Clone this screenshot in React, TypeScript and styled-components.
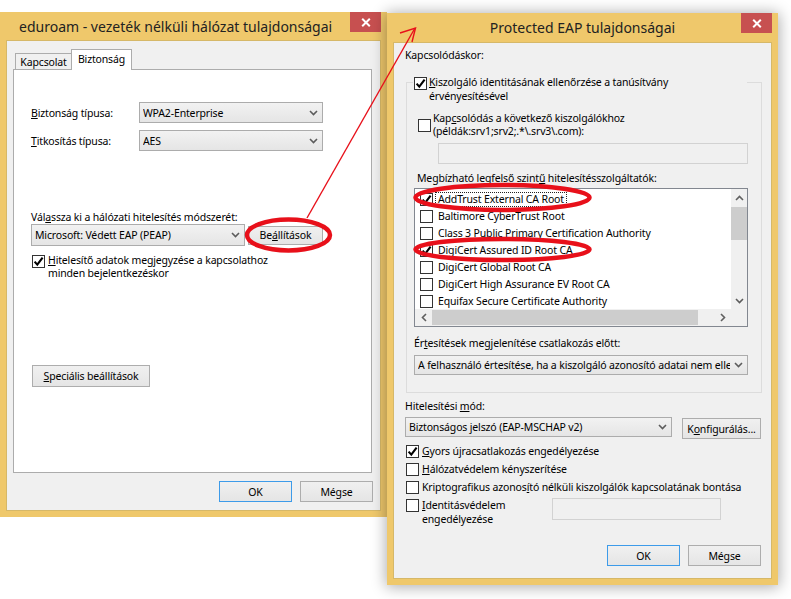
import React from "react";
import styled, { createGlobalStyle } from "styled-components";

const Global = createGlobalStyle`
  html, body { margin: 0; padding: 0; background: #fff; }
  body {
    font-family: "Noto Sans", "Open Sans", sans-serif;
    font-size: 10.5px;
    letter-spacing: -0.15px;
    color: #000;
  }
  * { box-sizing: border-box; }
`;

const Desktop = styled.div`
  position: relative;
  width: 791px;
  height: 599px;
  overflow: hidden;
  background: #fff;
`;

const Window = styled.div<{ $x: number; $y: number; $w: number; $h: number; $active?: boolean }>`
  position: absolute;
  left: ${(p) => p.$x}px;
  top: ${(p) => p.$y}px;
  width: ${(p) => p.$w}px;
  height: ${(p) => p.$h}px;
  background: #efc86b;
  padding: 0 6px 6px;
  display: flex;
  flex-direction: column;
  box-shadow: ${(p) => (p.$active ? "0 1px 14px 1px rgba(0,0,0,0.33)" : "none")};
  z-index: ${(p) => (p.$active ? 2 : 1)};
`;

const TitleBar = styled.div<{ $h: number }>`
  height: ${(p) => p.$h}px;
  flex: none;
  display: flex;
`;

const TitleText = styled.div<{ $center?: boolean }>`
  flex: 1;
  align-self: center;
  font-size: 14px;
  letter-spacing: 0;
  line-height: 18px;
  color: #222;
  white-space: nowrap;
  padding-left: ${(p) => (p.$center ? "31px" : "13px")};
  text-align: ${(p) => (p.$center ? "center" : "left")};
  margin-top: 1px;
`;

const CloseButton = styled.div`
  width: 31px;
  height: 20px;
  background: #c75050;
  display: flex;
  align-items: center;
  justify-content: center;
`;

const Client = styled.div<{ $pl?: number; $pr?: number }>`
  flex: 1;
  min-height: 0;
  background: #f0f0f0;
  border: 1px solid #d6b868;
  display: flex;
  flex-direction: column;
  padding-left: ${(p) => p.$pl ?? 0}px;
  padding-right: ${(p) => p.$pr ?? 0}px;
`;

/* ---------- common controls ---------- */

const Label = styled.div<{ $mt?: number; $ml?: number }>`
  line-height: 14px;
  white-space: nowrap;
  margin-top: ${(p) => p.$mt ?? 0}px;
  margin-left: ${(p) => p.$ml ?? 0}px;
`;

const SelectBox = styled.div<{ $w: number; $h: number; $mt?: number; $ml?: number }>`
  width: ${(p) => p.$w}px;
  height: ${(p) => p.$h}px;
  margin-top: ${(p) => p.$mt ?? 0}px;
  margin-left: ${(p) => p.$ml ?? 0}px;
  flex: none;
  border: 1px solid #acacac;
  background: linear-gradient(#f2f2f2, #e5e5e5);
  display: flex;
  align-items: center;
  padding-left: 3px;
`;

const SelectText = styled.span`
  flex: 1;
  overflow: hidden;
  white-space: nowrap;
  line-height: 14px;
`;

const ChevronSlot = styled.span`
  width: 17px;
  flex: none;
  display: flex;
  align-items: center;
  justify-content: center;
`;

const Button = styled.div<{ $w: number; $h: number; $default?: boolean; $mt?: number; $ml?: number }>`
  width: ${(p) => p.$w}px;
  height: ${(p) => p.$h}px;
  margin-top: ${(p) => p.$mt ?? 0}px;
  margin-left: ${(p) => p.$ml ?? 0}px;
  flex: none;
  border: 1px solid ${(p) => (p.$default ? "#3d9be9" : "#adadad")};
  background: linear-gradient(#f0f0f0, #e5e5e5);
  display: flex;
  align-items: center;
  justify-content: center;
  white-space: nowrap;
  line-height: 14px;
`;

const TextField = styled.div<{ $w: number; $h: number; $mt?: number; $ml?: number }>`
  width: ${(p) => p.$w}px;
  height: ${(p) => p.$h}px;
  margin-top: ${(p) => p.$mt ?? 0}px;
  margin-left: ${(p) => p.$ml ?? 0}px;
  flex: none;
  border: 1px solid #d2d2d2;
  background: #f0f0f0;
`;

const Box = styled.span<{ $mt?: number }>`
  width: 13px;
  height: 13px;
  flex: none;
  border: 1px solid #333;
  background: #fff;
  display: flex;
  align-items: center;
  justify-content: center;
  margin-top: ${(p) => p.$mt ?? 0}px;
`;

const CheckRow = styled.div<{ $mt?: number; $ml?: number; $gap?: number; $lh?: number; $center?: boolean }>`
  display: flex;
  align-items: ${(p) => (p.$center ? "center" : "flex-start")};
  gap: ${(p) => p.$gap ?? 3}px;
  margin-top: ${(p) => p.$mt ?? 0}px;
  margin-left: ${(p) => p.$ml ?? 0}px;
  line-height: ${(p) => p.$lh ?? 14}px;
  white-space: nowrap;
`;

const ButtonRow = styled.div<{ $mt: number; $pr?: number }>`
  display: flex;
  justify-content: flex-end;
  gap: 8px;
  margin-top: ${(p) => p.$mt}px;
  padding-right: ${(p) => p.$pr ?? 0}px;
`;

/* ---------- left dialog parts ---------- */

const TabArea = styled.div`
  margin: 8px 8px 0 6px;
  display: flex;
  flex-direction: column;
`;

const TabRow = styled.div`
  display: flex;
  align-items: flex-end;
  padding-left: 2px;
  height: 20px;
`;

const Tab = styled.div<{ $active?: boolean }>`
  position: relative;
  z-index: ${(p) => (p.$active ? 1 : 0)};
  width: ${(p) => (p.$active ? 61 : 57)}px;
  height: ${(p) => (p.$active ? 21 : 16)}px;
  margin-bottom: ${(p) => (p.$active ? -1 : 0)}px;
  margin-left: ${(p) => (p.$active ? -1 : 0)}px;
  border: 1px solid #acacac;
  border-bottom: none;
  background: ${(p) => (p.$active ? "#fff" : "#f0f0f0")};
  display: flex;
  justify-content: center;
  align-items: ${(p) => (p.$active ? "flex-start" : "center")};
  padding-top: ${(p) => (p.$active ? 2 : 0)}px;
  line-height: 14px;
`;

const TabPanel = styled.div`
  height: 404px;
  border: 1px solid #acacac;
  background: #fff;
  display: flex;
  flex-direction: column;
`;

const FieldGrid = styled.div`
  display: grid;
  grid-template-columns: 108px 184px;
  row-gap: 7px;
  align-items: center;
  margin: 32px 0 0 17px;
`;

const MethodRow = styled.div`
  display: flex;
  align-items: center;
  gap: 3px;
  margin: 0 0 0 17px;
`;

/* ---------- right dialog parts ---------- */

const GroupBox = styled.div`
  width: 356px;
  margin: 20px 0 0 1px;
  border: 1px solid #dcdcdc;
  padding-bottom: 17px;
  display: flex;
  flex-direction: column;
`;

const GroupHeader = styled.div`
  width: 334px;
  margin: -8px 0 0 6px;
  padding-left: 1px;
  background: #f0f0f0;
  display: flex;
  align-items: flex-start;
  gap: 2px;
  line-height: 14px;
  white-space: nowrap;
`;

const ListBox = styled.div`
  width: 334px;
  height: 139px;
  margin: 3px 0 0 7px;
  border: 1px solid #828790;
  background: #fff;
  display: grid;
  grid-template-columns: 316px 16px;
  grid-template-rows: 120px 17px;
`;

const ListItems = styled.div`
  overflow: hidden;
  padding-top: 2px;
  display: flex;
  flex-direction: column;
`;

const ListItem = styled.div`
  height: 17px;
  flex: none;
  display: flex;
  align-items: center;
  padding-left: 5px;
  gap: 2px;
  white-space: nowrap;
  line-height: 13px;
`;

const ItemText = styled.span<{ $focus?: boolean }>`
  border: 1px dotted ${(p) => (p.$focus ? "#222" : "transparent")};
  padding: 0 2px;
`;

const VScroll = styled.div`
  background: #f0f0f0;
  display: flex;
  flex-direction: column;
`;

const HScroll = styled.div`
  background: #f0f0f0;
  display: flex;
  align-items: stretch;
`;

const ScrollButton = styled.div<{ $w: number; $h: number }>`
  width: ${(p) => p.$w}px;
  height: ${(p) => p.$h}px;
  flex: none;
  display: flex;
  align-items: center;
  justify-content: center;
`;

const ThumbV = styled.div`
  margin-top: 1px;
  height: 33px;
  background: #cdcdcd;
`;

const ThumbH = styled.div`
  margin: 1px 0;
  width: 266px;
  background: #cdcdcd;
`;

const TrackFill = styled.div`
  flex: 1;
`;

const Corner = styled.div`
  background: #f0f0f0;
`;

const AuthRow = styled.div`
  display: flex;
  align-items: flex-start;
  gap: 10px;
  margin-top: 4px;
`;

const OptionList = styled.div`
  display: flex;
  flex-direction: column;
  gap: 4px;
  margin: 5px 0 0 1px;
`;

const TwoLine = styled.span<{ $w?: number }>`
  display: block;
  width: ${(p) => (p.$w ? `${p.$w}px` : "auto")};
  flex: none;
`;

const Overlay = styled.svg`
  position: absolute;
  left: 0;
  top: 0;
  width: 791px;
  height: 599px;
  pointer-events: none;
  z-index: 10;
`;

/* ---------- icons ---------- */

const CloseIcon = () => (
  <svg width="10" height="9" viewBox="0 0 10 9">
    <path d="M1.2 0.8 L8.8 8.2 M8.8 0.8 L1.2 8.2" stroke="#fff" strokeWidth="2" />
  </svg>
);

const ChevronDown = () => (
  <svg width="9" height="6" viewBox="0 0 9 6">
    <path d="M1 1 L4.5 4.5 L8 1" stroke="#5c5c5c" strokeWidth="1.6" fill="none" />
  </svg>
);

const ChevronUp = () => (
  <svg width="9" height="6" viewBox="0 0 9 6">
    <path d="M1 5 L4.5 1.5 L8 5" stroke="#606060" strokeWidth="1.6" fill="none" />
  </svg>
);

const ChevronLeft = () => (
  <svg width="6" height="9" viewBox="0 0 6 9">
    <path d="M5 1 L1.5 4.5 L5 8" stroke="#606060" strokeWidth="1.6" fill="none" />
  </svg>
);

const ChevronRight = () => (
  <svg width="6" height="9" viewBox="0 0 6 9">
    <path d="M1 1 L4.5 4.5 L1 8" stroke="#606060" strokeWidth="1.6" fill="none" />
  </svg>
);

const CheckMark = () => (
  <svg width="11" height="11" viewBox="0 0 11 11">
    <path d="M1.6 5.6 L4.3 8.6 L9.6 1.6" stroke="#000" strokeWidth="2.1" fill="none" />
  </svg>
);

const CheckBox = ({ checked, mt }: { checked?: boolean; mt?: number }) => (
  <Box $mt={mt}>{checked ? <CheckMark /> : null}</Box>
);

const Select = ({
  w,
  h,
  text,
  mt,
  ml,
}: {
  w: number;
  h: number;
  text: string;
  mt?: number;
  ml?: number;
}) => (
  <SelectBox $w={w} $h={h} $mt={mt} $ml={ml}>
    <SelectText>{text}</SelectText>
    <ChevronSlot>
      <ChevronDown />
    </ChevronSlot>
  </SelectBox>
);

const certs: { name: string; checked: boolean; focus?: boolean }[] = [
  { name: "AddTrust External CA Root", checked: true, focus: true },
  { name: "Baltimore CyberTrust Root", checked: false },
  { name: "Class 3 Public Primary Certification Authority", checked: false },
  { name: "DigiCert Assured ID Root CA", checked: true },
  { name: "DigiCert Global Root CA", checked: false },
  { name: "DigiCert High Assurance EV Root CA", checked: false },
  { name: "Equifax Secure Certificate Authority", checked: false },
];

function LeftDialog() {
  return (
    <Window $x={0} $y={12} $w={387} $h={505}>
      <TitleBar $h={28}>
        <TitleText>eduroam - vezeték nélküli hálózat tulajdonságai</TitleText>
        <CloseButton>
          <CloseIcon />
        </CloseButton>
      </TitleBar>
      <Client>
        <TabArea>
          <TabRow>
            <Tab>Kapcsolat</Tab>
            <Tab $active>Biztonság</Tab>
          </TabRow>
          <TabPanel>
            <FieldGrid>
              <Label>
                <u>B</u>iztonság típusa:
              </Label>
              <Select w={184} h={21} text="WPA2-Enterprise" />
              <Label>
                <u>T</u>itkosítás típusa:
              </Label>
              <Select w={184} h={21} text="AES" />
            </FieldGrid>
            <Label $mt={59} $ml={17}>
              Vál<u>a</u>ssza ki a hálózati hitelesítés módszerét:
            </Label>
            <MethodRow>
              <Select w={214} h={22} text="Microsoft: Védett EAP (PEAP)" />
              <Button $w={75} $h={19}>
                Be<u>á</u>llítások
              </Button>
            </MethodRow>
            <CheckRow $mt={8} $ml={18} $lh={13} $gap={3}>
              <CheckBox checked mt={1} />
              <TwoLine>
                <u>H</u>itelesítő adatok megjegyzése a kapcsolathoz
                <br />
                minden bejelentkezéskor
              </TwoLine>
            </CheckRow>
            <Button $w={118} $h={22} $mt={85} $ml={18}>
              <span>
                <u>S</u>peciális beállítások
              </span>
            </Button>
          </TabPanel>
        </TabArea>
        <ButtonRow $mt={8} $pr={7}>
          <Button $w={73} $h={21} $default>
            OK
          </Button>
          <Button $w={73} $h={21}>
            Mégse
          </Button>
        </ButtonRow>
      </Client>
    </Window>
  );
}

function RightDialog() {
  return (
    <Window $x={387} $y={13} $w={391} $h={572} $active>
      <TitleBar $h={29}>
        <TitleText $center>Protected EAP tulajdonságai</TitleText>
        <CloseButton>
          <CloseIcon />
        </CloseButton>
      </TitleBar>
      <Client $pl={11} $pr={10}>
        <Label $mt={5}>Kapcsolódáskor:</Label>
        <GroupBox>
          <GroupHeader>
            <CheckBox checked mt={2} />
            <TwoLine>
              <u>K</u>iszolgáló identitásának ellenőrzése a tanúsítvány
              <br />
              érvényesítésével
            </TwoLine>
          </GroupHeader>
          <CheckRow $mt={9} $ml={11} $lh={13} $gap={2} $center>
            <CheckBox />
            <TwoLine>
              Kap<u>c</u>solódás a következő kiszolgálókhoz
              <br />
              (példák:srv1;srv2;.*\.srv3\.com):
            </TwoLine>
          </CheckRow>
          <TextField $w={310} $h={21} $mt={5} $ml={31} />
          <Label $mt={7} $ml={10}>
            Megbízható legfelső szint<u>ű</u> hitelesítésszolgáltatók:
          </Label>
          <ListBox>
            <ListItems>
              {certs.map((c) => (
                <ListItem key={c.name}>
                  <CheckBox checked={c.checked} />
                  <ItemText $focus={c.focus}>{c.name}</ItemText>
                </ListItem>
              ))}
            </ListItems>
            <VScroll>
              <ScrollButton $w={16} $h={17}>
                <ChevronUp />
              </ScrollButton>
              <ThumbV />
              <TrackFill />
              <ScrollButton $w={16} $h={17}>
                <ChevronDown />
              </ScrollButton>
            </VScroll>
            <HScroll>
              <ScrollButton $w={17} $h={17}>
                <ChevronLeft />
              </ScrollButton>
              <ThumbH />
              <TrackFill />
              <ScrollButton $w={17} $h={17}>
                <ChevronRight />
              </ScrollButton>
            </HScroll>
            <Corner />
          </ListBox>
          <Label $mt={9} $ml={7}>
            Ér<u>t</u>esítések megjelenítése csatlakozás előtt:
          </Label>
          <Select
            w={334}
            h={20}
            mt={5}
            ml={7}
            text="A felhasználó értesítése, ha a kiszolgáló azonosító adatai nem ellenőrizhetők"
          />
        </GroupBox>
        <Label $mt={6}>
          Hitelesítési <u>m</u>ód:
        </Label>
        <AuthRow>
          <Select w={267} h={20} text="Biztonságos jelszó (EAP-MSCHAP v2)" />
          <Button $w={79} $h={21} $mt={1}>
            <span>
              K<u>o</u>nfigurálás...
            </span>
          </Button>
        </AuthRow>
        <OptionList>
          <CheckRow $gap={3}>
            <CheckBox checked mt={1} />
            <span>
              <u>G</u>yors újracsatlakozás engedélyezése
            </span>
          </CheckRow>
          <CheckRow $gap={3}>
            <CheckBox mt={1} />
            <span>
              <u>H</u>álózatvédelem kényszerítése
            </span>
          </CheckRow>
          <CheckRow $gap={3}>
            <CheckBox mt={1} />
            <span>
              Kriptografikus azonos<u>í</u>tó nélküli kiszolgálók kapcsolatának bontása
            </span>
          </CheckRow>
          <CheckRow $gap={3}>
            <CheckBox mt={1} />
            <TwoLine $w={127}>
              <u>I</u>dentitásvédelem
              <br />
              engedélyezése
            </TwoLine>
            <TextField $w={169} $h={22} />
          </CheckRow>
        </OptionList>
        <ButtonRow $mt={19}>
          <Button $w={73} $h={21} $default>
            OK
          </Button>
          <Button $w={73} $h={21}>
            Mégse
          </Button>
        </ButtonRow>
      </Client>
    </Window>
  );
}

function Annotations() {
  const red = "#e8101a";
  return (
    <Overlay viewBox="0 0 791 599">
      <ellipse cx={288.5} cy={235} rx={41.5} ry={15.5} fill="none" stroke={red} strokeWidth={4.5} />
      <ellipse cx={502.5} cy={197.5} rx={87} ry={12.5} fill="none" stroke={red} strokeWidth={4.5} />
      <ellipse cx={502.5} cy={249.5} rx={87} ry={10.5} fill="none" stroke={red} strokeWidth={4.5} />
      <line x1={307} y1={218} x2={415} y2={28} stroke={red} strokeWidth={1.4} />
      <polyline points="400,33 415.5,28 412,42" fill="none" stroke={red} strokeWidth={1.4} />
    </Overlay>
  );
}

export default function App() {
  return (
    <>
      <Global />
      <Desktop>
        <LeftDialog />
        <RightDialog />
        <Annotations />
      </Desktop>
    </>
  );
}
